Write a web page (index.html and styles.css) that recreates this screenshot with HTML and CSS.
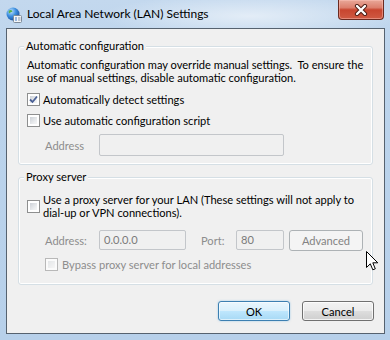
FILE: index.html
```html
<!DOCTYPE html>
<html lang="en">
<head>
    <meta charset="UTF-8">
    <title>Local Area Network (LAN) Settings</title>
    <link rel="stylesheet" href="styles.css">
</head>
<body>
    <div class="window">
        <div class="titlebar">
            <svg class="app-icon" width="16" height="16" viewBox="0 0 16 16">
                <defs>
                    <radialGradient id="globe" cx="0.35" cy="0.3" r="0.75">
                        <stop offset="0" stop-color="#bfe3ff"/>
                        <stop offset="0.5" stop-color="#3d8fe0"/>
                        <stop offset="1" stop-color="#1a4f9c"/>
                    </radialGradient>
                </defs>
                <circle cx="7" cy="7" r="6.5" fill="url(#globe)"/>
                <path d="M3 3.5 C4.5 2.5 6 3 6.5 4.5 C5.5 5.5 4 5 3.5 6.5 C2.5 5.5 2.5 4.5 3 3.5 Z" fill="#5bb04a"/>
                <path d="M8 8 C9.5 7.5 11 8.5 10.5 10.5 C9.5 11.5 8.5 11 8 10 Z" fill="#5bb04a"/>
                <rect x="7.5" y="8.5" width="8" height="7" rx="1" fill="#f4f6f8" stroke="#7d8a99"/>
                <rect x="9" y="10.5" width="2" height="1" fill="#3a78c8"/>
                <rect x="12" y="10.5" width="2.5" height="1" fill="#8a98a8"/>
                <rect x="9" y="12.5" width="2" height="1" fill="#3a78c8"/>
                <rect x="12" y="12.5" width="2.5" height="1" fill="#8a98a8"/>
            </svg>
            <span class="title">Local Area Network (LAN) Settings</span>
            <button class="close-btn">
                <svg width="14" height="12" viewBox="0 0 14 12">
                    <path d="M3 2 L11 10 M11 2 L3 10" stroke="#4a1a12" stroke-width="4.2" stroke-linecap="round"/>
                    <path d="M3 2 L11 10 M11 2 L3 10" stroke="#ffffff" stroke-width="2.4" stroke-linecap="round"/>
                </svg>
            </button>
        </div>

        <div class="client">
            <fieldset class="group">
                <legend>Automatic configuration</legend>
                <p class="desc">Automatic configuration may override manual settings.&nbsp; To ensure the<br>use of manual settings, disable automatic configuration.</p>
                <label class="check">
                    <span class="box">
                        <svg width="9" height="9" viewBox="0 0 9 9"><path d="M1 4.5 L3.5 7 L8 1.5" fill="none" stroke="#4b6196" stroke-width="1.8"/></svg>
                    </span>
                    Automatically detect settings
                </label>
                <label class="check">
                    <span class="box"></span>
                    Use automatic configuration script
                </label>
                <div class="field-row">
                    <span class="field-label label-address">Address</span>
                    <span class="textbox tb-script"></span>
                </div>
            </fieldset>

            <fieldset class="group proxy">
                <legend>Proxy server</legend>
                <label class="check multi">
                    <span class="box"></span>
                    <span>Use a proxy server for your LAN (These settings will not apply to<br>dial-up or VPN connections).</span>
                </label>
                <div class="field-row proxy-row">
                    <span class="field-label label-address">Address:</span>
                    <span class="textbox tb-address">0.0.0.0</span>
                    <span class="field-label label-port">Port:</span>
                    <span class="textbox tb-port">80</span>
                    <button class="btn disabled-btn">Advanced</button>
                </div>
                <label class="check disabled">
                    <span class="box"></span>
                    Bypass proxy server for local addresses
                </label>
            </fieldset>

            <div class="actions">
                <button class="btn default-btn">OK</button>
                <button class="btn">Cancel</button>
            </div>
        </div>

        <svg class="cursor" width="13" height="20" viewBox="0 0 13 20">
            <path d="M0.5 0.5 L0.5 16.5 L4.3 12.8 L6.8 18.8 L9.3 17.8 L6.8 11.8 L11.8 11.8 Z" fill="#ffffff" stroke="#000000" stroke-width="1" stroke-linejoin="round"/>
        </svg>
    </div>
</body>
</html>
```

FILE: styles.css
```css
body {
    margin: 0;
    width: 390px;
    height: 340px;
    overflow: hidden;
    font-family: 'Lato', 'Noto Sans', sans-serif;
    font-size: 11.1px;
    color: #000;
}

.window {
    position: relative;
    height: 340px;
    display: flex;
    flex-direction: column;
    background:
        radial-gradient(ellipse 150px 22px at 250px 16px, rgba(255, 255, 255, 0.55), rgba(255, 255, 255, 0)),
        linear-gradient(180deg, #c3d8ee 0%, #bcd4ec 20%, #b7d0ea 100%);
}

.titlebar {
    height: 28px;
    flex-shrink: 0;
    display: flex;
    align-items: center;
    padding-left: 6px;
}

.app-icon {
    margin-top: 1px;
}

.title {
    margin-left: 5px;
    font-size: 12px;
    line-height: 16px;
}

.close-btn {
    align-self: flex-start;
    margin-left: auto;
    margin-right: 6px;
    width: 46px;
    height: 20px;
    padding: 0;
    border: 1px solid #6b2a20;
    border-top: none;
    border-radius: 0 0 4px 4px;
    background: linear-gradient(180deg, #e9a899 0%, #dc7f6d 40%, #c8452f 52%, #cf5a43 100%);
    box-shadow: inset 0 0 0 1px rgba(255, 200, 190, 0.45);
    display: flex;
    align-items: center;
    justify-content: center;
}

.client {
    flex: 1;
    min-height: 0;
    margin: 0 5px 6px 6px;
    border: 1px solid #56626f;
    background-color: #f0f0f0;
    display: flex;
    flex-direction: column;
}

.group {
    margin: 9px 11px 0 11px;
    padding: 0 8px 8px 8px;
    border: 1px solid #d5dfe5;
    border-radius: 3px;
    box-shadow: inset 0 0 0 1px #ffffff;
    min-width: 0;
}

.group legend {
    padding: 0 2px;
    margin-left: -3px;
    line-height: 16px;
    background-color: #f0f0f0;
}

.desc {
    margin: 4px 0 0 0;
    line-height: 13px;
}

.check {
    display: flex;
    align-items: center;
    height: 16px;
    margin-top: 5px;
    gap: 3px;
}

.desc + .check {
    margin-top: 7px;
}

.box {
    width: 13px;
    height: 13px;
    box-sizing: border-box;
    border: 1px solid #8e8f8f;
    padding: 2px;
    background: linear-gradient(135deg, #cdd1d7 0%, #eceef0 70%, #f6f6f6 100%) content-box, linear-gradient(#ffffff, #ffffff) padding-box;
    display: flex;
    align-items: center;
    justify-content: center;
    flex-shrink: 0;
}

.box svg {
    margin: -2px;
}

.check.multi {
    height: auto;
    margin-top: 8px;
    line-height: 13px;
    align-items: center;
}

.check.disabled {
    color: #8d8d8d;
    margin-left: 18px;
    margin-top: 5px;
    gap: 4px;
}

.check.disabled .box {
    border-color: #b8b8b8;
    background: linear-gradient(135deg, #e4e6e8, #f6f6f6) content-box, linear-gradient(#fbfbfb, #fbfbfb) padding-box;
}

.field-row {
    display: flex;
    align-items: center;
    margin-top: 6px;
    padding-left: 18px;
    height: 22px;
}

.field-label {
    color: #8d8d8d;
}

.label-address {
    width: 54px;
}

.label-port {
    width: 35px;
    margin-left: 15px;
}

.textbox {
    box-sizing: border-box;
    height: 22px;
    border: 1px solid #c3c6ca;
    border-radius: 2px;
    background-color: #f0f0f0;
    color: #7a7a7a;
    padding: 0 4px;
    line-height: 20px;
}

.tb-script {
    width: 185px;
}

.proxy-row {
    margin-top: 10px;
}

.proxy-row .textbox {
    height: 20px;
    line-height: 18px;
}

.tb-address {
    width: 87px;
}

.tb-port {
    width: 48px;
}

.btn {
    box-sizing: border-box;
    width: 72px;
    height: 20px;
    padding: 0;
    font-family: inherit;
    font-size: 11.1px;
    color: #000;
    border: 1px solid #707070;
    border-radius: 3px;
    background: linear-gradient(180deg, #f2f2f2 0%, #ebebeb 48%, #dddddd 52%, #cfcfcf 100%);
    box-shadow: inset 0 0 0 1px rgba(255, 255, 255, 0.75);
}

.disabled-btn {
    width: 74px;
    height: 21px;
    margin-left: 5px;
    color: #838383;
    border-color: #adb2b5;
    background: #f4f4f4;
    box-shadow: none;
}

.default-btn {
    border-color: #3c7fb1;
    background: linear-gradient(180deg, #eaf6fd 0%, #d9f0fc 48%, #bee6fd 52%, #a7d9f5 100%);
    box-shadow: inset 0 0 0 1px rgba(255, 255, 255, 0.6), 0 0 2px rgba(60, 160, 230, 0.5);
}

.proxy {
    margin-top: 4px;
    padding-bottom: 12px;
}

.actions {
    display: flex;
    justify-content: flex-end;
    gap: 12px;
    margin: 16px 10px 0 0;
}

.cursor {
    position: absolute;
    left: 366px;
    top: 251px;
}
```
